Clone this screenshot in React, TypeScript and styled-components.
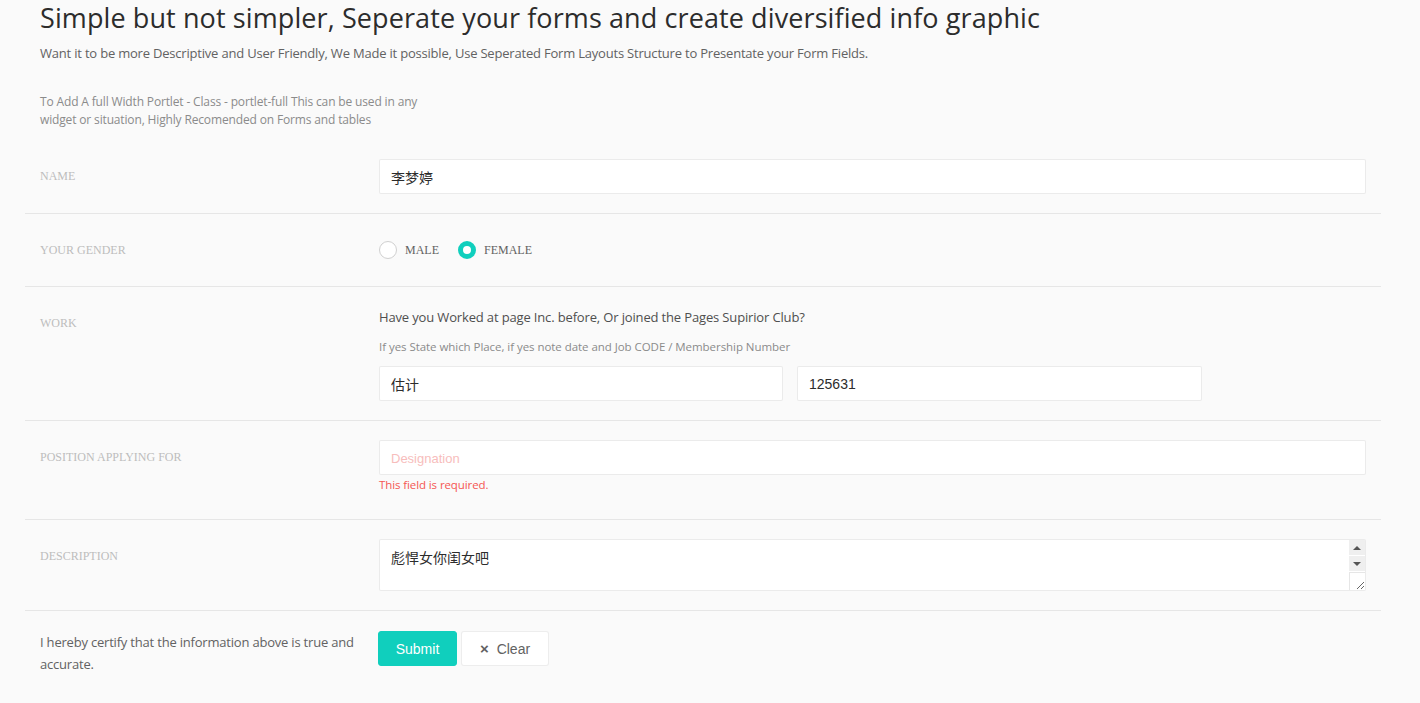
import React from "react";
import styled, { createGlobalStyle } from "styled-components";

const GlobalStyle = createGlobalStyle`
  html, body {
    margin: 0;
    padding: 0;
    background: #fafafa;
  }
  body {
    font-family: "Open Sans", "Noto Sans CJK SC", sans-serif;
    color: #626262;
    -webkit-font-smoothing: antialiased;
  }
  * { box-sizing: border-box; }
`;

const Page = styled.div`
  padding: 0 39px 0 25px;
`;

const Header = styled.header`
  padding: 0 15px;
`;

const Title = styled.h3`
  margin: 0;
  font-size: 27px;
  line-height: 35px;
  font-weight: 400;
  color: #2c2c2c;
  letter-spacing: 0.1px;
`;

const Lead = styled.p`
  margin: 9px 0 0;
  font-size: 13px;
  line-height: 18px;
  color: #626262;
  letter-spacing: -0.2px;
`;

const Note = styled.p`
  margin: 31px 0 0;
  max-width: 390px;
  font-size: 12px;
  line-height: 18px;
  color: #8b8b8b;
  letter-spacing: -0.15px;
`;

const Form = styled.form`
  margin-top: 11px;
`;

const Row = styled.div`
  display: grid;
  grid-template-columns: 339px 1fr;
  padding: 19px 0;
  border-bottom: 1px solid #e6e6e6;
  &:last-child {
    padding-top: 20px;
    border-bottom: none;
  }
`;

const Label = styled.label`
  padding: 1px 15px 0;
  font-family: "Liberation Serif", "Times New Roman", serif;
  font-size: 12px;
  line-height: 32px;
  text-transform: uppercase;
  color: #bdbdbd;
`;

const Certify = styled.div`
  padding: 0 8px 0 15px;
  font-size: 13px;
  line-height: 22px;
  color: #626262;
  letter-spacing: -0.2px;
`;

const Control = styled.div`
  padding: 0 15px;
`;

const TextInput = styled.input<{ $error?: boolean }>`
  display: block;
  width: 100%;
  height: 35px;
  padding: 0 11px;
  border: 1px solid rgba(0, 0, 0, 0.08);
  border-radius: 2px;
  background: #fff;
  font-family: "Liberation Sans", "Noto Sans CJK SC", sans-serif;
  font-size: 14px;
  color: #2c2c2c;
  outline: none;
  &::placeholder {
    font-size: 13px;
    color: ${(p) => (p.$error ? "#f7bdbc" : "#c2c2c2")};
  }
`;

const AreaWrap = styled.div`
  position: relative;
`;

const TextArea = styled.textarea`
  display: block;
  width: 100%;
  height: 52px;
  padding: 8px 28px 8px 11px;
  border: 1px solid rgba(0, 0, 0, 0.08);
  border-radius: 2px;
  background: #fff;
  font-family: "Liberation Sans", "Noto Sans CJK SC", sans-serif;
  font-size: 14px;
  line-height: 20px;
  color: #2c2c2c;
  outline: none;
  overflow: hidden;
  resize: none;
`;

const ScrollRail = styled.div`
  position: absolute;
  top: 1px;
  right: 1px;
  bottom: 1px;
  width: 16px;
  display: flex;
  flex-direction: column;
  pointer-events: none;
`;

const ScrollButton = styled.div`
  height: 16px;
  background: #efefef;
  border-bottom: 1px solid #fff;
  display: flex;
  align-items: center;
  justify-content: center;
`;

const Grip = styled.div`
  flex: 1;
  background: #fff;
  border-left: 1px solid #e6e6e6;
  border-top: 1px solid #e6e6e6;
  display: flex;
  align-items: flex-end;
  justify-content: flex-end;
`;

const RadioGroup = styled.div`
  display: flex;
  align-items: center;
  height: 34px;
  gap: 19px;
`;

const RadioOption = styled.label`
  display: flex;
  align-items: center;
  gap: 8px;
  font-family: "Liberation Serif", "Times New Roman", serif;
  font-size: 12px;
  text-transform: uppercase;
  color: #626262;
  cursor: pointer;
`;

const RadioDot = styled.span<{ $checked?: boolean }>`
  display: inline-block;
  width: 18px;
  height: 18px;
  border-radius: 50%;
  background: #fff;
  border: ${(p) => (p.$checked ? "5px solid #10cfbd" : "1px solid #d0d0d0")};
`;

const Question = styled.p`
  margin: 0;
  font-size: 13px;
  line-height: 22px;
  color: #4f4f4f;
  letter-spacing: -0.15px;
`;

const Hint = styled.p`
  margin: 9px 0 0;
  font-size: 11.5px;
  line-height: 20px;
  color: #8b8b8b;
  letter-spacing: -0.05px;
`;

const Pair = styled.div`
  display: grid;
  grid-template-columns: 404px 405px;
  gap: 14px;
  margin-top: 9px;
`;

const ErrorText = styled.div`
  margin: 1px 0 6px;
  font-size: 11.5px;
  line-height: 18px;
  color: #f55753;
  letter-spacing: -0.1px;
`;

const Actions = styled.div`
  display: flex;
  gap: 4px;
  margin-left: -1px;
`;

const Button = styled.button<{ $primary?: boolean }>`
  width: ${(p) => (p.$primary ? "79px" : "88px")};
  height: 35px;
  padding: 0;
  border-radius: 3px;
  border: 1px solid ${(p) => (p.$primary ? "#10cfbd" : "rgba(0,0,0,0.07)")};
  background: ${(p) => (p.$primary ? "#10cfbd" : "#fff")};
  color: ${(p) => (p.$primary ? "#fff" : "#626262")};
  font-family: "Liberation Sans", Arial, sans-serif;
  font-size: 14px;
  display: inline-flex;
  align-items: center;
  justify-content: center;
  gap: 8px;
  cursor: pointer;
`;

const Times = styled.span`
  font-size: 15px;
  font-weight: 700;
  line-height: 1;
`;

export default function App() {
  return (
    <>
      <GlobalStyle />
      <Page>
        <Header>
          <Title>
            Simple but not simpler, Seperate your forms and create diversified info graphic
          </Title>
          <Lead>
            Want it to be more Descriptive and User Friendly, We Made it possible, Use Seperated Form
            Layouts Structure to Presentate your Form Fields.
          </Lead>
          <Note>
            To Add A full Width Portlet - Class - portlet-full This can be used in any widget or
            situation, Highly Recomended on Forms and tables
          </Note>
        </Header>
        <Form onSubmit={(e) => e.preventDefault()}>
          <Row>
            <Label>Name</Label>
            <Control>
              <TextInput defaultValue="李梦婷" />
            </Control>
          </Row>
          <Row>
            <Label>Your Gender</Label>
            <Control>
              <RadioGroup>
                <RadioOption>
                  <RadioDot />
                  Male
                </RadioOption>
                <RadioOption>
                  <RadioDot $checked />
                  Female
                </RadioOption>
              </RadioGroup>
            </Control>
          </Row>
          <Row>
            <Label>Work</Label>
            <Control>
              <Question>Have you Worked at page Inc. before, Or joined the Pages Supirior Club?</Question>
              <Hint>If yes State which Place, if yes note date and Job CODE / Membership Number</Hint>
              <Pair>
                <TextInput defaultValue="估计" />
                <TextInput defaultValue="125631" />
              </Pair>
            </Control>
          </Row>
          <Row>
            <Label>Position applying for</Label>
            <Control>
              <TextInput $error placeholder="Designation" />
              <ErrorText>This field is required.</ErrorText>
            </Control>
          </Row>
          <Row>
            <Label>Description</Label>
            <Control>
              <AreaWrap>
                <TextArea defaultValue="彪悍女你闺女吧" />
                <ScrollRail>
                  <ScrollButton>
                    <svg width="8" height="4" viewBox="0 0 8 4">
                      <path d="M0 4 L4 0 L8 4 Z" fill="#555" />
                    </svg>
                  </ScrollButton>
                  <ScrollButton>
                    <svg width="8" height="4" viewBox="0 0 8 4">
                      <path d="M0 0 L8 0 L4 4 Z" fill="#555" />
                    </svg>
                  </ScrollButton>
                  <Grip>
                    <svg width="10" height="10" viewBox="0 0 10 10">
                      <path d="M2 9 L9 2 M6 9 L9 6" stroke="#666" strokeWidth="1" fill="none" />
                    </svg>
                  </Grip>
                </ScrollRail>
              </AreaWrap>
            </Control>
          </Row>
          <Row>
            <Certify>I hereby certify that the information above is true and accurate.</Certify>
            <Control>
              <Actions>
                <Button $primary type="submit">Submit</Button>
                <Button type="button">
                  <Times>×</Times>
                  Clear
                </Button>
              </Actions>
            </Control>
          </Row>
        </Form>
      </Page>
    </>
  );
}
